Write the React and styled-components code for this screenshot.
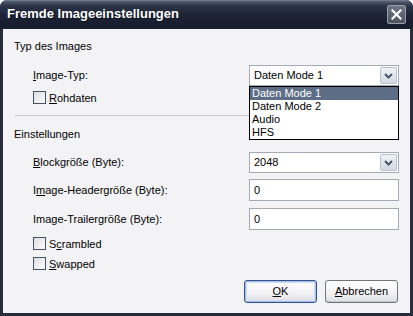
import React from "react";
import styled, { createGlobalStyle } from "styled-components";

const Global = createGlobalStyle`
  html, body { margin: 0; padding: 0; background: #ffffff; }
  body { font-family: "Liberation Sans", Arial, sans-serif; font-size: 11px; color: #000; }
  * { box-sizing: border-box; }
`;

const Window = styled.div`
  width: 413px;
  height: 316px;
  display: flex;
  flex-direction: column;
  background: #262d3c;
  border-radius: 7px 7px 0 0;
  overflow: hidden;
`;

const TitleBar = styled.div`
  height: 29px;
  flex: none;
  display: flex;
  align-items: center;
  justify-content: space-between;
  padding: 0 7px 2px 7px;
  background: linear-gradient(to bottom, #7a8294 0px, #4c5468 2px, #2c3447 6px, #1d2436 15px, #161c2c 26px, #1c2333 29px);
`;

const Title = styled.span`
  font-family: "Liberation Sans", Arial, sans-serif;
  font-weight: bold;
  font-size: 13px;
  color: #ffffff;
  text-shadow: 1px 1px 0 #0c1020;
`;

const CloseButton = styled.div`
  width: 19px;
  height: 19px;
  margin-right: 0;
  margin-top: 2px;
  border: 1px solid #9aa0ac;
  border-radius: 2px;
  background: linear-gradient(to bottom, #6e7482, #4e5462);
  display: flex;
  align-items: center;
  justify-content: center;
`;

const Body = styled.div`
  flex: 1;
  margin: 0 3px 3px 3px;
  background: #f3f3f6;
  padding: 11px 11px 10px 11px;
  display: flex;
  flex-direction: column;
`;

const GroupTitle = styled.div`
  height: 13px;
  line-height: 13px;
  margin-top: ${(p) => p.$mt || 0}px;
`;

const FieldRow = styled.div`
  display: flex;
  align-items: center;
  margin-top: ${(p) => p.$mt}px;
  height: ${(p) => p.$h}px;
  padding-left: 19px;
  position: relative;
`;

const Label = styled.span`
  flex: 1;
  line-height: 13px;
`;

const U = styled.span`
  text-decoration: underline;
`;

const ControlSlot = styled.div`
  width: 150px;
  height: 100%;
  position: relative;
`;

const Combo = styled.div`
  height: 100%;
  border: 1px solid #a4abb6;
  background: #ffffff;
  display: flex;
  align-items: center;
  padding: 1px;
`;

const ComboText = styled.span`
  flex: 1;
  padding-left: 3px;
  line-height: 13px;
`;

const DropButton = styled.div`
  width: 17px;
  height: 100%;
  border: 1px solid #b9c2cf;
  border-radius: 2px;
  background: linear-gradient(to bottom, #f0f2f6, #d3d9e2);
  display: flex;
  align-items: center;
  justify-content: center;
`;

const TextInput = styled.div`
  height: 100%;
  border: 1px solid #a4abb6;
  background: #ffffff;
  padding-left: 4px;
  display: flex;
  align-items: center;
  line-height: 13px;
`;

const ListBox = styled.div`
  position: absolute;
  top: 100%;
  left: 0;
  width: 150px;
  border: 1px solid #000000;
  background: #ffffff;
  z-index: 2;
`;

const ListItem = styled.div`
  height: 13px;
  line-height: 13px;
  padding-left: 2px;
  background: ${(p) => (p.$selected ? "#5d6d85" : "transparent")};
  color: ${(p) => (p.$selected ? "#ffffff" : "#000000")};
`;

const CheckRow = styled.div`
  display: flex;
  align-items: center;
  gap: 3px;
  padding-left: 19px;
  height: 13px;
  margin-top: ${(p) => p.$mt}px;
`;

const Box = styled.span`
  width: 13px;
  height: 13px;
  border: 1px solid #445468;
  background: linear-gradient(135deg, #dcdde2 0%, #eeeef1 50%, #fbfbfc 100%);
`;

const Separator = styled.div`
  margin-top: ${(p) => p.$mt}px;
  height: 1px;
  background: #cfcfd4;
`;

const ButtonRow = styled.div`
  margin-top: 10px;
  height: 23px;
  display: flex;
  justify-content: flex-end;
  gap: 8px;
  padding-right: 1px;
`;

const Button = styled.div`
  width: 73px;
  height: 23px;
  border: 1px solid ${(p) => (p.$default ? "#34528a" : "#6f7580")};
  border-radius: 3px;
  background: linear-gradient(to bottom, #ffffff 0%, #f2f2f5 60%, #dcdde3 100%);
  box-shadow: ${(p) =>
    p.$default
      ? "inset 0 0 0 1px #a9c2ea, inset 0 0 0 2px #cfdcf2"
      : "inset 0 -1px 0 #c8c9d0"};
  display: flex;
  align-items: center;
  justify-content: center;
  line-height: 13px;
`;

const Chevron = () => (
  <svg width="9" height="6" viewBox="0 0 9 6">
    <path d="M1 1 L4.5 4.5 L8 1" fill="none" stroke="#4a5568" strokeWidth="2" />
  </svg>
);

const CloseX = () => (
  <svg width="11" height="11" viewBox="0 0 11 11">
    <path d="M1.5 1.5 L9.5 9.5 M9.5 1.5 L1.5 9.5" stroke="#ffffff" strokeWidth="2.2" strokeLinecap="square" />
  </svg>
);

export default function App() {
  return (
    <>
      <Global />
      <Window>
        <TitleBar>
          <Title>Fremde Imageeinstellungen</Title>
          <CloseButton>
            <CloseX />
          </CloseButton>
        </TitleBar>
        <Body>
          <GroupTitle>Typ des Images</GroupTitle>
          <FieldRow $mt={12} $h={21}>
            <Label>
              <U>I</U>mage-Typ:
            </Label>
            <ControlSlot>
              <Combo>
                <ComboText>Daten Mode 1</ComboText>
                <DropButton>
                  <Chevron />
                </DropButton>
              </Combo>
              <ListBox>
                <ListItem $selected>Daten Mode 1</ListItem>
                <ListItem>Daten Mode 2</ListItem>
                <ListItem>Audio</ListItem>
                <ListItem>HFS</ListItem>
              </ListBox>
            </ControlSlot>
          </FieldRow>
          <CheckRow $mt={5}>
            <Box />
            <span>
              <U>R</U>ohdaten
            </span>
          </CheckRow>
          <Separator $mt={11} />
          <GroupTitle $mt={12}>Einstellungen</GroupTitle>
          <FieldRow $mt={11} $h={21}>
            <Label>
              <U>B</U>lockgröße (Byte):
            </Label>
            <ControlSlot>
              <Combo>
                <ComboText>2048</ComboText>
                <DropButton>
                  <Chevron />
                </DropButton>
              </Combo>
            </ControlSlot>
          </FieldRow>
          <FieldRow $mt={6} $h={22}>
            <Label>
              I<U>m</U>age-Headergröße (Byte):
            </Label>
            <ControlSlot>
              <TextInput>0</TextInput>
            </ControlSlot>
          </FieldRow>
          <FieldRow $mt={7} $h={22}>
            <Label>Image-Trailergröße (Byte):</Label>
            <ControlSlot>
              <TextInput>0</TextInput>
            </ControlSlot>
          </FieldRow>
          <CheckRow $mt={7}>
            <Box />
            <span>
              S<U>c</U>rambled
            </span>
          </CheckRow>
          <CheckRow $mt={7}>
            <Box />
            <span>
              <U>S</U>wapped
            </span>
          </CheckRow>
          <ButtonRow>
            <Button $default>
              <span>
                <U>O</U>K
              </span>
            </Button>
            <Button>
              <span>
                <U>A</U>bbrechen
              </span>
            </Button>
          </ButtonRow>
        </Body>
      </Window>
    </>
  );
}
